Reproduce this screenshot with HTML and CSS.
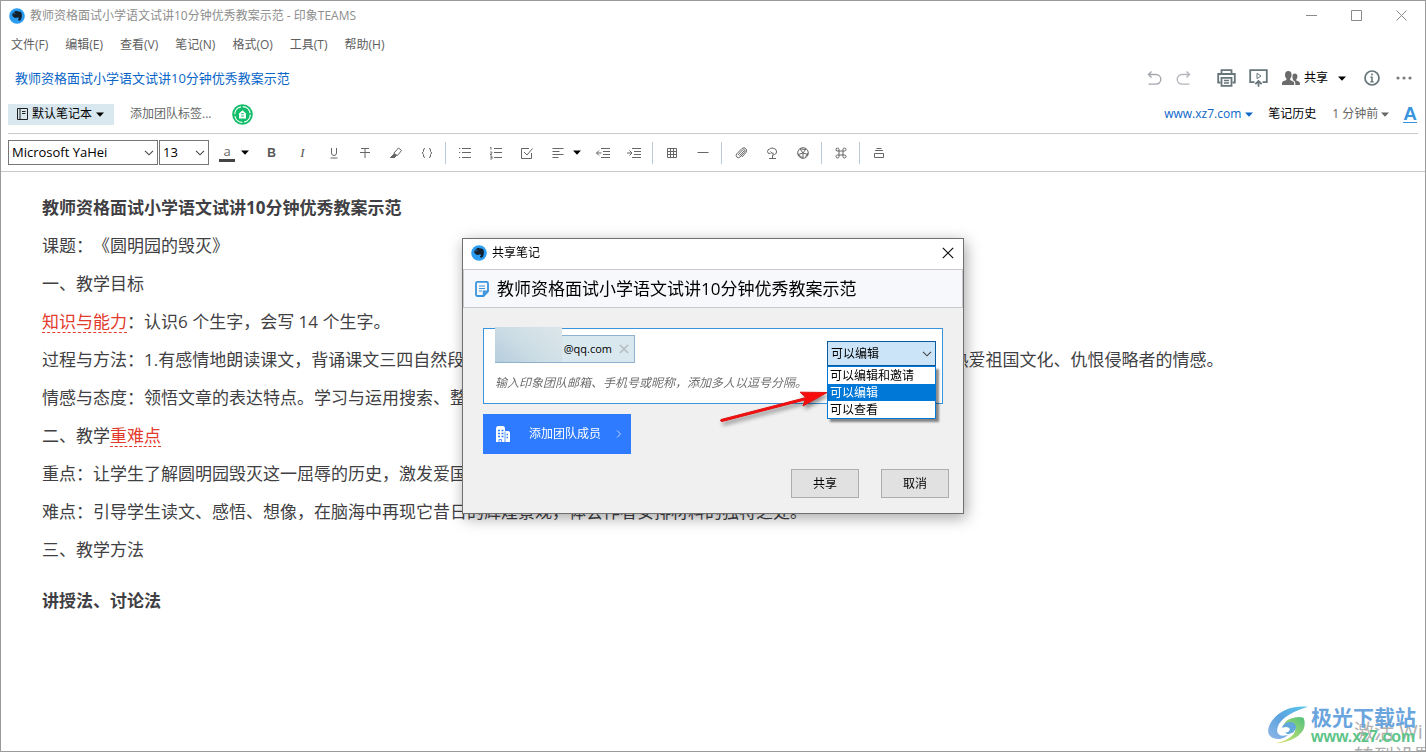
FILE: index.html
```html
<!DOCTYPE html>
<html lang="zh-CN">
<head>
<meta charset="utf-8">
<title>教师资格面试小学语文试讲10分钟优秀教案示范 - 印象TEAMS</title>
<link rel="stylesheet" href="styles.css">
</head>
<body>
<svg class="defs" width="0" height="0" aria-hidden="true">
  <symbol id="logo" viewBox="0 0 16 16">
    <circle cx="8" cy="8" r="7.8" fill="#2a9df2"/>
    <path d="M3 6.2 5.6 3.4Q7 2.4 8.4 3.2L11.4 3.7Q13 4.4 12.9 7.2 12.8 10.6 11.6 12.2 10 13.2 9 12 8.8 10.6 10.3 10.6 10 9.2 8.6 9.5 7 10.2 5 9.6 3.2 8.6 3 6.2Z" fill="#14202e"/>
    <path d="M5.7 3.6V6H3.2" fill="none" stroke="#2a6da8" stroke-width=".7"/>
  </symbol>
  <symbol id="caret" viewBox="0 0 8 5"><path d="M0 .5h8L4 4.8Z" fill="currentColor"/></symbol>
  <symbol id="chev" viewBox="0 0 10 6"><path d="M1 .8 5 4.8 9 .8" fill="none" stroke="currentColor" stroke-width="1.1"/></symbol>
</svg>

<div class="app">
  <header class="titlebar">
    <svg class="logo"><use href="#logo"/></svg>
    <span class="titlebar-text">教师资格面试小学语文试讲10分钟优秀教案示范 - 印象TEAMS</span>
    <div class="win-controls">
      <button aria-label="最小化"><svg width="11" height="11" viewBox="0 0 11 11"><path d="M0 5.5h11"/></svg></button>
      <button aria-label="最大化"><svg width="11" height="11" viewBox="0 0 11 11"><path d="M.5.5h10v10H.5Z"/></svg></button>
      <button aria-label="关闭"><svg width="11" height="11" viewBox="0 0 11 11"><path d="m.5.5 10 10m0-10-10 10"/></svg></button>
    </div>
  </header>

  <nav class="menubar">
    <button>文件(F)</button><button>编辑(E)</button><button>查看(V)</button><button>笔记(N)</button><button>格式(O)</button><button>工具(T)</button><button>帮助(H)</button>
  </nav>

  <div class="note-head">
    <h1 class="note-title">教师资格面试小学语文试讲10分钟优秀教案示范</h1>
    <div class="note-actions">
      <button class="undo" aria-label="撤销"><svg width="16" height="18" viewBox="0 0 16 18"><path d="M5.500 2.500 2.500 5.500l3 3M2.500 5.500H10a4.800 4.800 0 0 1 0 9.600H2.500" fill="none" stroke="#a3a6ad" stroke-width="1.4"/></svg></button>
      <button class="redo" aria-label="重做"><svg width="16" height="18" viewBox="0 0 16 18"><path d="M10.500 2.500 13.500 5.500l-3 3M13.500 5.500H6a4.800 4.800 0 0 0 0 9.600H13.500" fill="none" stroke="#b4b6bb" stroke-width="1.4"/></svg></button>
      <button class="print" aria-label="打印"><svg width="19" height="18" viewBox="0 0 19 18"><g fill="none" stroke="#67767a" stroke-width="1.8"><path d="M4.500 4.500V1.200h10v3.300M3.500 13.500H1.200V5h16.600v8.500h-2.300"/><path d="M4.500 8.800h10v8h-10Z"/><path d="M7 11.500h5M7 14h5" stroke-width="1.300"/></g></svg></button>
      <button class="present" aria-label="演示"><svg width="19" height="18" viewBox="0 0 19 18"><path d="M5.500 13.100H1.200V1.200h16.600v11.900H13.500" fill="none" stroke="#67767a" stroke-width="1.800"/><path d="M8 4.300 12 7l-4 2.600Z" fill="none" stroke="#67767a"/><path d="m6.300 15.200 3.200-3.200 3.200 3.200M9.500 12.500v5.300" fill="none" stroke="#67767a" stroke-width="1.800"/></svg></button>
      <button class="share"><svg width="18" height="15" viewBox="0 0 18 15" fill="#6b6b6b"><path d="M6.300 0C8.500 0 9.700 1.500 9.600 3.700 9.600 5.600 9 6.500 8.200 7.500v1.600l3 1.400q1 .6 1 2V14H0v-2q0-1.200 1.200-1.700l3.200-1.300V7.500C3.500 6.500 3 5.500 3 3.700 3 1.500 4.200 0 6.300 0Z"/><path d="M12.800 2.500c1.800 0 2.700 1.200 2.600 2.900 0 1.500-.5 2.200-1.100 2.900v1.100l2.500 1.200q1.100.5 1.100 1.500V14h-4.600v-1.800q0-1.700-1.300-2.400l-1-.6V8.300C10.300 7.500 10.500 6 10.500 5.200 10.500 3.500 11.200 2.500 12.800 2.500Z"/></svg><span>共享</span></button>
      <button class="share-more" aria-label="共享选项"><svg class="caret"><use href="#caret"/></svg></button>
      <button class="info" aria-label="信息"><svg width="16" height="16" viewBox="0 0 16 16"><circle cx="8" cy="8" r="7" fill="none" stroke="#67767a" stroke-width="1.700"/><path d="M8 3.600v1.800M8 6.800v5M6.400 7.300H8M6.400 11.800h3.200" stroke="#67767a" stroke-width="1.500"/></svg></button>
      <button class="more" aria-label="更多"><svg width="16" height="4" viewBox="0 0 16 4" fill="#7c7c7c"><circle cx="2" cy="2" r="1.600"/><circle cx="8" cy="2" r="1.600"/><circle cx="14" cy="2" r="1.600"/></svg></button>
    </div>
  </div>

  <div class="note-meta">
    <button class="notebook"><svg width="11" height="12" viewBox="0 0 11 12"><path d="M.5.500h10v11H.500ZM3 .500v11M5 3.500h3.500M5 5.500h3.500" fill="none" stroke="#222"/></svg><span>默认笔记本</span><svg class="caret"><use href="#caret"/></svg></button>
    <button class="tags">添加团队标签...</button>
    <button class="badge" aria-label="团队空间"><svg width="21" height="21" viewBox="0 0 21 21"><circle cx="10.500" cy="10.500" r="10.300" fill="#10bd68"/><circle cx="10.500" cy="10.500" r="7.800" fill="none" stroke="#fff" stroke-width="1.200" stroke-dasharray="10.500 1.750"/><path d="M7 9.500 10.500 6.200 14 9.500v5H7Z" fill="#fff"/><path d="M9.200 9.700h2.600M9.200 12h2.600" stroke="#10bd68"/></svg></button>
    <a class="source" href="#">www.xz7.com<svg class="caret"><use href="#caret"/></svg></a>
    <button class="history">笔记历史</button>
    <button class="time">1 分钟前<svg class="caret"><use href="#caret"/></svg></button>
    <button class="textstyle" aria-label="文字样式">A</button>
  </div>

  <div class="toolbar" role="toolbar" aria-label="格式">
    <span class="combo combo-font"><select aria-label="字体"><option>Microsoft YaHei</option></select><svg class="chev"><use href="#chev"/></svg></span>
    <span class="combo combo-size"><select aria-label="字号"><option>13</option></select><svg class="chev"><use href="#chev"/></svg></span>
    <button class="color" aria-label="文字颜色">a</button>
    <button class="drop drop-wide" aria-label="更多颜色"><svg class="caret"><use href="#caret"/></svg></button>
    <button class="tool bold">B</button>
    <button class="tool italic">I</button>
    <button class="tool" aria-label="下划线"><svg viewBox="0 0 14 14"><path d="M4.500 2v5a2.500 2.500 0 0 0 5 0V2M3.500 12h7"/></svg></button>
    <button class="tool" aria-label="删除线"><svg viewBox="0 0 14 14"><path d="M3 2.500h8M7 2.500V12M2 6.500h10"/></svg></button>
    <button class="tool" aria-label="高亮"><svg viewBox="0 0 14 14"><path d="m5 7 4.500-5 3 2.500L8.500 9.500 5.500 9ZM5.500 7.500 8 9.500M1.500 11.500h4l2-2"/><path d="M1.500 11.500 5 8l2 2-1.500 1.500Z" fill="#666"/></svg></button>
    <button class="tool" aria-label="代码块"><svg viewBox="0 0 14 14"><path d="M5 2.500q-1.500 0-1.500 1.500v1.500L2.200 7l1.300 1.500V10q0 1.500 1.500 1.500M9 2.500q1.500 0 1.500 1.500v1.500L11.800 7l-1.300 1.500V10q0 1.500-1.500 1.500"/></svg></button>
    <span class="sep"></span>
    <button class="tool" aria-label="项目列表"><svg viewBox="0 0 14 14"><path d="M4 2.500h9M4 6.500h9M4 11.500h9M1 2.500h1.200M1 6.500h1.200M1 11.500h1.200"/></svg></button>
    <button class="tool" aria-label="编号列表"><svg viewBox="0 0 14 14"><path d="M5 2.500h8M5 6.500h8M5 11.500h8"/><path d="M2 1v3M1 1.500h1M1 6h2v1L1 8.500h2M1 10h2v3H1M1.500 11.500H3" stroke-width=".8"/></svg></button>
    <button class="tool" aria-label="复选框"><svg viewBox="0 0 14 14"><path d="M11.500 7v5.500h-10v-10H9M4 6l3 3 5.500-6.500"/></svg></button>
    <button class="tool" aria-label="对齐"><svg viewBox="0 0 14 14"><path d="M1.500 2.500h11M1.500 5.500h7M1.500 8.500h11M1.500 11.500h6"/></svg></button>
    <button class="drop" aria-label="更多对齐"><svg class="caret"><use href="#caret"/></svg></button>
    <button class="tool" aria-label="减少缩进"><svg viewBox="0 0 14 14"><path d="M5 2.500h9M7 5.500h7M7 8.500h7M5 11.500h9M.500 7h5M3 4.500.500 7 3 9.500"/></svg></button>
    <button class="tool" aria-label="增加缩进"><svg viewBox="0 0 14 14"><path d="M5 2.500h9M7 5.500h7M7 8.500h7M5 11.500h9M0 7h5M2.500 4.500 5 7 2.500 9.500"/></svg></button>
    <span class="sep"></span>
    <button class="tool" aria-label="表格"><svg viewBox="0 0 14 14"><path d="M2.500 2.500h9v9h-9ZM5.500 2.500v9M8.500 2.500v9M2.500 5.500h9M2.500 8.500h9"/></svg></button>
    <button class="tool" aria-label="分隔线"><svg viewBox="0 0 14 14"><path d="M1.500 6.500h11"/></svg></button>
    <span class="sep"></span>
    <button class="tool" aria-label="附件"><svg viewBox="0 0 14 14"><path d="m4 9 4.500-5q1.200-1 2.200 0t0 2.200L6 11q-1.700 1.500-3.200 0t0-3.200L8 2.500q2-1.500 3.700 0t.3 4L8 11M5.500 9.800 10 5"/></svg></button>
    <button class="tool" aria-label="地图"><svg viewBox="0 0 14 14"><path d="M5.500 7.500Q2.500 8 2.500 5.500 2.500 3.500 4.500 3.200 5.500 1.500 8 2.200 11 2.500 11.500 5 12 8 9.500 8.500L7.500 9.500V12.500M5.500 5.500 8 8.500V6.500M4 12.500h7"/></svg></button>
    <button class="tool" aria-label="拍照"><svg viewBox="0 0 14 14"><circle cx="7" cy="7" r="5.300"/><path d="m7 7-3-4.300M7 7l3.200-4.300M7 7l5 1.500M7 7v5M7 7 2 8.500M4 2.700l5.200 1M12 7 9.500 10.700M2 8.500l5 3.600"/></svg></button>
    <span class="sep"></span>
    <button class="tool" aria-label="快捷键"><svg viewBox="0 0 14 14"><path d="M5 5h4v4H5ZM5 5H4a1.500 1.500 0 1 1 1-1.500ZM9 5V3.500A1.500 1.500 0 1 1 10.500 5ZM9 9h1.500A1.500 1.500 0 1 1 9 10.500ZM5 9v1.500A1.500 1.500 0 1 1 3.500 9Z"/></svg></button>
    <span class="sep"></span>
    <button class="tool" aria-label="模板"><svg viewBox="0 0 14 14"><path d="M4.500 2.500h5M3 4.500h8M2.500 7.500h9v4h-9Z"/></svg></button>
  </div>

  <main class="doc">
    <p><strong>教师资格面试小学语文试讲10分钟优秀教案示范</strong></p>
    <p>课题：《圆明园的毁灭》</p>
    <p>一、教学目标</p>
    <p><span class="mark">知识与能力</span>：认识6 个生字，会写 14 个生字。</p>
    <p>过程与方法：1.有感情地朗读课文，背诵课文三四自然段。2.读懂课文内容，了解圆明园昔日辉煌与毁灭。3.激发学生心中热爱祖国文化、仇恨侵略者的情感。</p>
    <p>情感与态度：领悟文章的表达特点。学习与运用搜索、整理资料的方法。</p>
    <p>二、教学<span class="mark">重难点</span></p>
    <p>重点：让学生了解圆明园毁灭这一屈辱的历史，激发爱国之情。</p>
    <p>难点：引导学生读文、感悟、想像，在脑海中再现它昔日的辉煌景观，体会作者安排材料的独特之处。</p>
    <p>三、教学方法</p>
    <p class="spaced"><strong>讲授法、讨论法</strong></p>
  </main>

  <div class="activate">激活 Wi<br>转到设置</div>
  <div class="watermark">
    <svg width="42" height="40" viewBox="0 0 46 42">
      <defs><linearGradient id="wm1" x1="0" y1="1" x2="1" y2="0"><stop offset="0" stop-color="#8fb8e8"/><stop offset=".5" stop-color="#5aa2df"/><stop offset="1" stop-color="#58c8ea"/></linearGradient><linearGradient id="wm2" x1="0" y1="1" x2="1" y2="0"><stop offset="0" stop-color="#e6e873"/><stop offset="1" stop-color="#4fc17b"/></linearGradient></defs>
      <path d="M45 1Q18-1 5 17-3 30 6 35q9 4 17-3-11 3-12-5Q12 11 45 1Z" fill="url(#wm1)"/>
      <path d="M40 13q5 13-9 22-10 6-22 6 14-3 20-10 5-8-2-10-5-1-9 3 0-7 8-10 8-3 14-1Z" fill="url(#wm2)"/>
      <path d="M16 24q4-8 12-6 7 4 1 11-7 4-9 0 5 0 5-4-2-3-9-1Z" fill="#62a8dc"/>
    </svg>
    <div class="wm-text"><div class="wm-name">极光下载站</div><div class="wm-url">www.xz7.com</div></div>
  </div>
</div>

<div class="overlay">
  <section class="dialog" role="dialog" aria-labelledby="dlg-title">
    <header class="dlg-bar">
      <svg class="logo"><use href="#logo"/></svg>
      <span id="dlg-title">共享笔记</span>
      <button class="dlg-close" aria-label="关闭"><svg width="12" height="12" viewBox="0 0 12 12"><path d="m.800.800 10.400 10.400m0-10.400L.800 11.200" stroke="#111" stroke-width="1.200"/></svg></button>
    </header>
    <h2 class="dlg-note"><svg width="14" height="16" viewBox="0 0 14 16"><path d="M2.500.900h9q1.500 0 1.500 1.500v8L8.500 15h-6Q1 15 1 13.500V2.400Q1 .900 2.500.900ZM13 10.500H8.700V15" fill="none" stroke="#3a94dc" stroke-width="1.800"/><path d="M4 5h6M4 7.500h6M4 10h3" stroke="#3a94dc" stroke-width="1.100"/></svg>教师资格面试小学语文试讲10分钟优秀教案示范</h2>
    <div class="dlg-body">
      <div class="invite">
        <div class="invite-main">
          <div class="chip"><span class="blurred"></span><span class="chip-text">@qq.com</span><button aria-label="移除"><svg width="10" height="10" viewBox="0 0 10 10"><path d="m1 1 8 8M9 1 1 9" stroke="#b4bbc0" stroke-width="1.600"/></svg></button></div>
          <input class="hint" type="text" aria-label="成员" placeholder="输入印象团队邮箱、手机号或昵称，添加多人以逗号分隔。">
        </div>
        <div class="perm">
          <select aria-label="权限"><option>可以编辑</option></select><svg class="chev"><use href="#chev"/></svg>
          <ul class="perm-list" role="listbox">
            <li role="option">可以编辑和邀请</li>
            <li role="option" aria-selected="true" class="on">可以编辑</li>
            <li role="option">可以查看</li>
          </ul>
          <svg class="arrow" width="114" height="50" viewBox="0 0 114 50" aria-hidden="true"><path d="M3 34.500 88 12.500 82 7.200 109 7.500 85 21 87 15 4 36.500Q1.500 36 3 34.500Z" fill="#f80c0c" stroke="#e01212"/></svg>
        </div>
      </div>
      <button class="add-member"><svg width="14" height="16" viewBox="0 0 14 16"><path d="M0 2.500Q0 0 2 0h5Q9 0 9 2.500V5h3q2 0 2 2v9H0Z" fill="#fff"/><path d="M2 4.500h2M5.500 4.500h2M2 7.500h2M5.500 7.500h2M2 10.500h2M5.500 10.500h2M10.500 8.500h1.500M10.500 11.500h1.500" stroke="#2e7bff" stroke-width="1.500"/><path d="M3 16v-2.500h2.500V16M9 5.500V16" stroke="#2e7bff" fill="none" stroke-width=".8"/></svg><span>添加团队成员</span><svg width="6" height="8" viewBox="0 0 6 8"><path d="m1 .500 3.500 3.500L1 7.500" stroke="#b9d2ff" fill="none"/></svg></button>
    </div>
    <footer class="dlg-foot"><button>共享</button><button>取消</button></footer>
  </section>
</div>
</body>
</html>
```

FILE: styles.css
```css
* { box-sizing: border-box; }

body {
  margin: 0;
  font-family: "Open Sans", "Noto Sans CJK SC", sans-serif;
  font-size: 12px;
  line-height: 18px;
  color: #000;
  text-spacing-trim: space-all;
}

button, select, input {
  font: inherit;
  color: inherit;
  background: none;
  border: 0;
  border-radius: 0;
  padding: 0;
  margin: 0;
}

button svg, .logo, .caret, .chev { display: block; flex: none; }
.defs { position: absolute; }
.logo { width: 16px; height: 16px; }
.caret { width: 8px; height: 5px; }
.chev { width: 10px; height: 6px; color: #444; }

.app {
  position: relative;
  min-height: 100vh;
  border: 1px solid #9b9b9b;
  background: #fff;
  overflow: hidden;
}

/* title bar and menu */
.titlebar {
  display: flex;
  align-items: center;
  height: 29px;
  padding: 0 18px 0 8px;
}
.titlebar-text { margin-left: 5px; color: #8e8e8e; }
.win-controls { display: flex; gap: 34px; margin-left: auto; }
.win-controls path { fill: none; stroke: #8a8a8a; }

.menubar {
  display: flex;
  align-items: center;
  gap: 17px;
  height: 29px;
  padding-left: 10px;
  color: #5e5e5e;
}

/* note header */
.note-head {
  display: flex;
  align-items: center;
  height: 38px;
  padding: 0 13px 0 14px;
}
.note-title { margin: 0; font-size: 13px; font-weight: 400; color: #0a66c8; }
.note-actions { display: flex; align-items: center; margin-left: auto; }
.redo { margin-left: 14px; }
.print { margin-left: 25px; }
.present { margin-left: 13px; }
.share { display: flex; align-items: center; gap: 4px; margin-left: 14px; }
.share-more { margin-left: 10px; }
.info { margin-left: 18px; }
.more { margin-left: 16px; }

.note-meta {
  display: flex;
  align-items: center;
  height: 37px;
  margin: 0 7px;
  padding-bottom: 2px;
  border-bottom: 1px solid #c9c9c9;
}
.notebook {
  display: flex;
  align-items: center;
  gap: 4px;
  height: 21px;
  padding: 0 10px 0 9px;
  background: #d9e7ee;
}
.tags { margin-left: 16px; color: #666; }
.badge { margin-left: 21px; }
.source {
  display: flex;
  align-items: center;
  gap: 4px;
  margin-left: auto;
  color: #0a66c8;
  text-decoration: none;
}
.history { margin-left: 15px; }
.time { display: flex; align-items: center; gap: 3px; margin-left: 16px; color: #666; }
.textstyle {
  margin: 0 1px 0 14px;
  border-bottom: 1px solid #3a94dc;
  color: #3a94dc;
  font: bold 19px/16px "Liberation Sans", sans-serif;
}

/* formatting toolbar */
.toolbar {
  display: flex;
  align-items: center;
  height: 38px;
  padding-left: 7px;
  border-bottom: 1px solid #c9c9c9;
}
.combo { display: flex; align-items: center; height: 25px; border: 1px solid #767676; }
.combo select {
  flex: 1;
  min-width: 0;
  height: 100%;
  padding: 0 0 2px 3px;
  appearance: none;
  font-size: 13px;
}
.combo .chev { margin: 0 3px 0 -13px; pointer-events: none; }
.combo-font { width: 150px; }
.combo-size { width: 50px; margin-left: 1px; }
.color {
  width: 16px;
  height: 19px;
  margin-left: 10px;
  border-bottom: 3px solid #444;
  color: #666;
  font-size: 13px;
  line-height: 14px;
}
.drop { width: 14px; }
.drop-wide { width: 15px; margin-left: 6px; }
.tool {
  display: flex;
  justify-content: center;
  align-items: center;
  width: 31px;
  height: 25px;
  color: #555;
}
.tool svg { width: 14px; height: 14px; fill: none; stroke: #666; stroke-width: 1; }
.bold { font: bold 12px "Liberation Sans", sans-serif; }
.italic { font: italic 13px "Liberation Serif", serif; }
.sep { width: 1px; height: 22px; margin: 0 3px; background: #b9cadb; }

/* note text */
.doc {
  padding: 17px 41px;
  font-size: 17px;
  line-height: 38px;
  color: #3f3f44;
  white-space: nowrap;
}
.doc p { margin: 0; }
.doc .spaced { margin-top: 13px; }
.mark {
  color: #e33a2c;
  text-decoration: underline dashed 1px;
  text-underline-offset: 4px;
}

/* desktop watermarks */
.watermark {
  position: absolute;
  right: 9px;
  bottom: 6px;
  display: flex;
  align-items: center;
  gap: 2px;
}
.wm-name { color: #6aa5dd; font-size: 21px; font-weight: 700; line-height: 24px; }
.wm-url { color: #5cc487; font: bold 16px/16px "Liberation Sans", sans-serif; }
.activate {
  position: absolute;
  left: calc(100% - 71px);
  top: calc(100% - 32px);
  color: #b0b0b0;
  font-size: 20px;
  line-height: 25px;
  white-space: nowrap;
}

/* share dialog */
.overlay {
  position: fixed;
  inset: 0;
  display: grid;
  place-items: center;
}
.dialog {
  width: 502px;
  border: 1px solid #707070;
  background: #f0f0f0;
  box-shadow: 2px 4px 14px rgba(0, 0, 0, .35);
}
.dlg-bar {
  display: flex;
  align-items: center;
  gap: 5px;
  height: 30px;
  padding: 0 9px 2px 8px;
  background: #fff;
}
.dlg-close { margin-left: auto; }
.dlg-note {
  display: flex;
  align-items: center;
  gap: 8px;
  height: 39px;
  margin: 0;
  padding-left: 11px;
  border: 1px solid #c8cacc;
  background: #f7f8fb;
  font-size: 17px;
  font-weight: 400;
}
.dlg-body { padding: 20px 20px 15px; }
.invite {
  display: flex;
  justify-content: space-between;
  padding: 6px 6px 11px 11px;
  border: 1px solid #3a94dc;
  background: #fff;
}
.invite-main { width: 320px; }
.chip {
  position: relative;
  display: flex;
  justify-content: flex-end;
  align-items: center;
  gap: 7px;
  width: 140px;
  height: 28px;
  padding-right: 5px;
  border: 1px solid #8fb2ce;
  background: #d9e7ee;
}
.chip-text { font-size: 11px; }
.blurred {
  position: absolute;
  left: -1px;
  top: -9px;
  width: 67px;
  height: 35px;
  background: linear-gradient(40deg, #b4cddd, #cddde5 45%, #dce6ea);
}
.hint { display: block; width: 100%; height: 18px; margin-top: 11px; }
.hint::placeholder { color: #6e6e6e; opacity: 1; font-style: italic; }

.perm { position: relative; width: 109px; margin-top: 6px; }
.perm select {
  display: block;
  width: 100%;
  height: 25px;
  padding-left: 3px;
  border: 1px solid #0a5aa0;
  background: #cce4f7;
  appearance: none;
}
.perm > .chev { position: absolute; right: 4px; top: 10px; }
.perm-list {
  position: absolute;
  left: 0;
  top: 25px;
  width: 100%;
  margin: 0;
  padding: 0;
  border: 1px solid #0078d7;
  background: #fff;
  box-shadow: 3px 3px 2px rgba(0, 0, 0, .45);
  list-style: none;
}
.perm-list li { padding-left: 2px; line-height: 17px; }
.perm-list .on { background: #0078d7; color: #fff; }
.arrow {
  position: absolute;
  right: 104px;
  top: 44px;
  filter: drop-shadow(2px 3px 2px rgba(0, 0, 0, .45));
}

.add-member {
  display: flex;
  align-items: center;
  width: 148px;
  height: 40px;
  margin-top: 10px;
  padding: 0 9px 0 13px;
  background: #2e7bff;
  color: #fff;
}
.add-member span { margin: 0 auto 0 19px; }
.dlg-foot { display: flex; justify-content: flex-end; gap: 22px; padding: 0 14px 15px; }
.dlg-foot button {
  width: 68px;
  height: 29px;
  border: 1px solid #adadad;
  background: #e1e1e1;
}
```
